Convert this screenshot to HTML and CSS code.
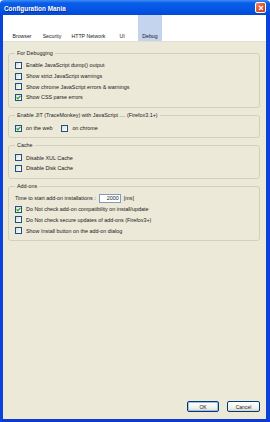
FILE: index.html
```html
<!DOCTYPE html>
<html lang="en">
<head>
  <meta charset="UTF-8" />
  <title>Configuration Mania</title>
  <link rel="stylesheet" href="styles.css">
</head>
<body>
  <div class="window">

    <!-- Title bar -->
    <div class="titlebar">
      <span class="title">Configuration Mania</span>
      <span class="close">
        <svg width="6" height="6" viewBox="0 0 6 6"><path d="M1 1L5 5M5 1L1 5" stroke="#fff" stroke-width="1.3" /></svg>
      </span>
    </div>

    <div class="frame">
      <!-- Pane buttons -->
      <div class="tabs">
        <span class="tab tab-browser">Browser</span>
        <span class="tab tab-security">Security</span>
        <span class="tab tab-http">HTTP Network</span>
        <span class="tab tab-ui">UI</span>
        <span class="tab tab-debug selected">Debug</span>
      </div>

      <div class="panel">
        <fieldset class="group g-debug">
          <legend>For Debugging</legend>
          <label class="row"><span class="cb"></span>Enable JavaScript dump() output</label>
          <label class="row"><span class="cb"></span>Show strict JavaScript warnings</label>
          <label class="row"><span class="cb"></span>Show chrome JavaScript errors &amp; warnings</label>
          <label class="row"><span class="cb checked"><svg width="5" height="5" viewBox="0 0 5 5"><path d="M0.6 2.4L1.9 3.8L4.4 0.9" fill="none" stroke="#21a121" stroke-width="1.2" /></svg></span>Show CSS parse errors</label>
        </fieldset>

        <fieldset class="group g-jit">
          <legend>Enable JIT (TraceMonkey) with JavaScript .... (Firefox3.1+)</legend>
          <div class="row inline">
            <label class="opt"><span class="cb checked"><svg width="5" height="5" viewBox="0 0 5 5"><path d="M0.6 2.4L1.9 3.8L4.4 0.9" fill="none" stroke="#21a121" stroke-width="1.2" /></svg></span>on the web</label>
            <label class="opt"><span class="cb"></span>on chrome</label>
          </div>
        </fieldset>

        <fieldset class="group g-cache">
          <legend>Cache</legend>
          <label class="row"><span class="cb"></span>Disable XUL Cache</label>
          <label class="row"><span class="cb"></span>Disable Disk Cache</label>
        </fieldset>

        <fieldset class="group g-addons">
          <legend>Add-ons</legend>
          <div class="row time-row">
            <span class="time-label">Time to start add-on installations :</span>
            <span class="num">2000</span>
            <span>[ms]</span>
          </div>
          <label class="row"><span class="cb checked"><svg width="5" height="5" viewBox="0 0 5 5"><path d="M0.6 2.4L1.9 3.8L4.4 0.9" fill="none" stroke="#21a121" stroke-width="1.2" /></svg></span>Do Not check add-on compatibility on install/update</label>
          <label class="row"><span class="cb"></span>Do Not check secure updates of add-ons (Firefox3+)</label>
          <label class="row"><span class="cb"></span>Show Install button on the add-on dialog</label>
        </fieldset>

        <div class="buttons">
          <span class="btn default">OK</span>
          <span class="btn">Cancel</span>
        </div>
      </div>
    </div>
  </div>
</body>
</html>
```

FILE: styles.css
```css
body {
  margin: 0;
  font-family: "Liberation Sans", Arial, sans-serif;
  font-size: 5.4px;
  color: #1a1a1a;
}

.window {
  width: 270px;
  height: 422px;
  display: flex;
  flex-direction: column;
}

/* Title bar */
.titlebar {
  height: 15px;
  flex: none;
  display: flex;
  align-items: center;
  justify-content: space-between;
  padding: 0 4px 0 4px;
  background: linear-gradient(#3d8df5 0%, #0a5de8 20%, #0556e6 60%, #0348d6 100%);
  border-radius: 4px 4px 0 0;
}

.title {
  color: #fff;
  font-weight: bold;
  font-size: 6.4px;
  text-shadow: 1px 1px 0 #0a2a8a;
  padding-top: 1px;
}

.close {
  width: 9px;
  height: 9px;
  border: 1px solid #fff;
  border-radius: 2px;
  background: linear-gradient(135deg, #f08a6a, #df4a22 60%, #c73a12);
  display: flex;
  align-items: center;
  justify-content: center;
}

.frame {
  flex: 1;
  display: flex;
  flex-direction: column;
  border-left: 3px solid #0a43dc;
  border-right: 4px solid #0a43dc;
  border-bottom: 3px solid #0a3ad0;
  background: #ece9d8;
}

/* Pane buttons */
.tabs {
  height: 26px;
  flex: none;
  display: flex;
  background: #fff;
  border-bottom: 1px solid #e2dfcf;
  padding-left: 5px;
}

.tab {
  display: flex;
  align-items: flex-end;
  justify-content: center;
  padding-bottom: 2px;
  box-sizing: border-box;
  font-size: 5.2px;
}

.tab-browser { width: 28px; }
.tab-security { width: 32px; }
.tab-http { width: 41px; }
.tab-ui { width: 26px; }
.tab-debug { width: 24px; margin-left: 3px; }

.tab.selected {
  background: #c4d3ee;
}

/* Panel */
.panel {
  flex: 1;
  display: flex;
  flex-direction: column;
  padding: 8px 6px 7px 5px;
}

.group {
  margin: 0 0 4px 0;
  padding: 3px 0 4px 6px;
  border: 1px solid #d0d0bf;
  border-radius: 3px;
}

.group legend {
  padding: 0 2px;
  line-height: 7px;
  color: #222;
}

.g-jit {
  padding-top: 4px;
}

.row {
  display: flex;
  align-items: center;
  height: 10.7px;
  white-space: nowrap;
}

.opt {
  display: flex;
  align-items: center;
  margin-right: 9px;
}

.cb {
  width: 5px;
  height: 5px;
  border: 1px solid #1c5180;
  background: linear-gradient(135deg, #dcdcd7, #fff);
  margin-right: 4px;
  display: flex;
  align-items: center;
  justify-content: center;
  flex: none;
}

.time-row {
  height: 11px;
}

.num {
  width: 19px;
  height: 7px;
  border: 1px solid #7f9db9;
  background: #fff;
  text-align: right;
  line-height: 7px;
  padding-right: 1px;
  margin: 0 3px 0 3px;
}

/* Dialog buttons */
.buttons {
  margin-top: auto;
  display: flex;
  justify-content: flex-end;
  gap: 8px;
}

.btn {
  height: 11px;
  box-sizing: border-box;
  border: 1px solid #003c74;
  border-radius: 2px;
  background: linear-gradient(#ffffff, #f0f0ea 70%, #d6d0c5);
  display: flex;
  align-items: center;
  justify-content: center;
  width: 33px;
  font-size: 5px;
}

.btn.default {
  width: 32px;
  box-shadow: inset 0 0 0 1px #9fbdef;
}
```
